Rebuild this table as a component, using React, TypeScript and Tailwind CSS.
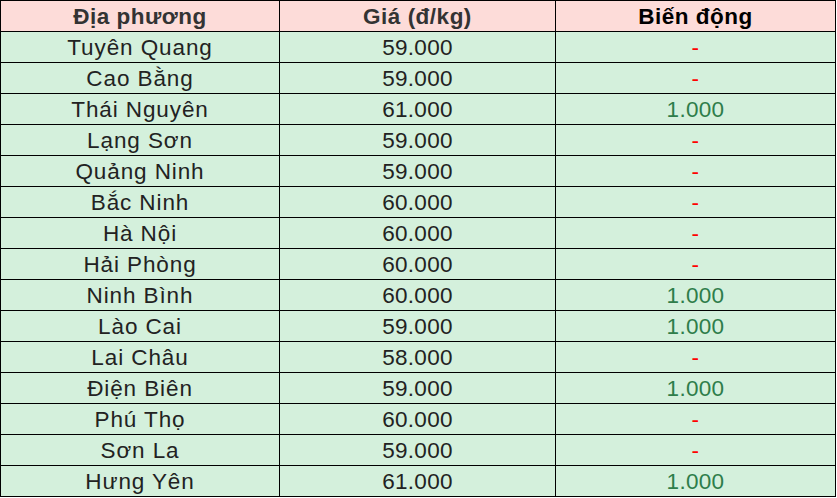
const rows: [string, string, string | null][] = [
  ["Tuyên Quang", "59.000", null],
  ["Cao Bằng", "59.000", null],
  ["Thái Nguyên", "61.000", "1.000"],
  ["Lạng Sơn", "59.000", null],
  ["Quảng Ninh", "59.000", null],
  ["Bắc Ninh", "60.000", null],
  ["Hà Nội", "60.000", null],
  ["Hải Phòng", "60.000", null],
  ["Ninh Bình", "60.000", "1.000"],
  ["Lào Cai", "59.000", "1.000"],
  ["Lai Châu", "58.000", null],
  ["Điện Biên", "59.000", "1.000"],
  ["Phú Thọ", "60.000", null],
  ["Sơn La", "59.000", null],
  ["Hưng Yên", "61.000", "1.000"],
];

const cell =
  "h-[31px] pt-[2px] border-r border-b border-black flex items-center justify-center leading-none";

const App = () => {
  return (
    <div className="w-[837px] h-[498px] bg-white">
      <div
        className="w-[836px] grid grid-cols-[279px_276px_280px] border-t border-l border-black text-[22.5px] text-[#222]"
        style={{ fontFamily: '"Liberation Sans", Arial, sans-serif' }}
      >
        <div className={`${cell} bg-[#fddcd9] font-bold text-[#333] tracking-[0.5px]`}>Địa phương</div>
        <div className={`${cell} bg-[#fddcd9] font-bold text-[#333] tracking-[0.5px]`}>Giá (đ/kg)</div>
        <div className={`${cell} bg-[#fddcd9] font-bold text-black tracking-[0.5px]`}>Biến động</div>
        {rows.map(([name, price, change]) => (
          <div key={name} className="contents">
            <div className={`${cell} bg-[#d4f0dc] tracking-[0.9px]`}>{name}</div>
            <div className={`${cell} bg-[#d4f0dc] tracking-[0.3px]`}>{price}</div>
            <div className={`${cell} bg-[#d4f0dc] tracking-[0.3px]`}>
              {change ? (
                <span className="text-[#2e7d4a]">{change}</span>
              ) : (
                <span className="text-[#ff0000]">-</span>
              )}
            </div>
          </div>
        ))}
      </div>
    </div>
  );
};

export default App;
